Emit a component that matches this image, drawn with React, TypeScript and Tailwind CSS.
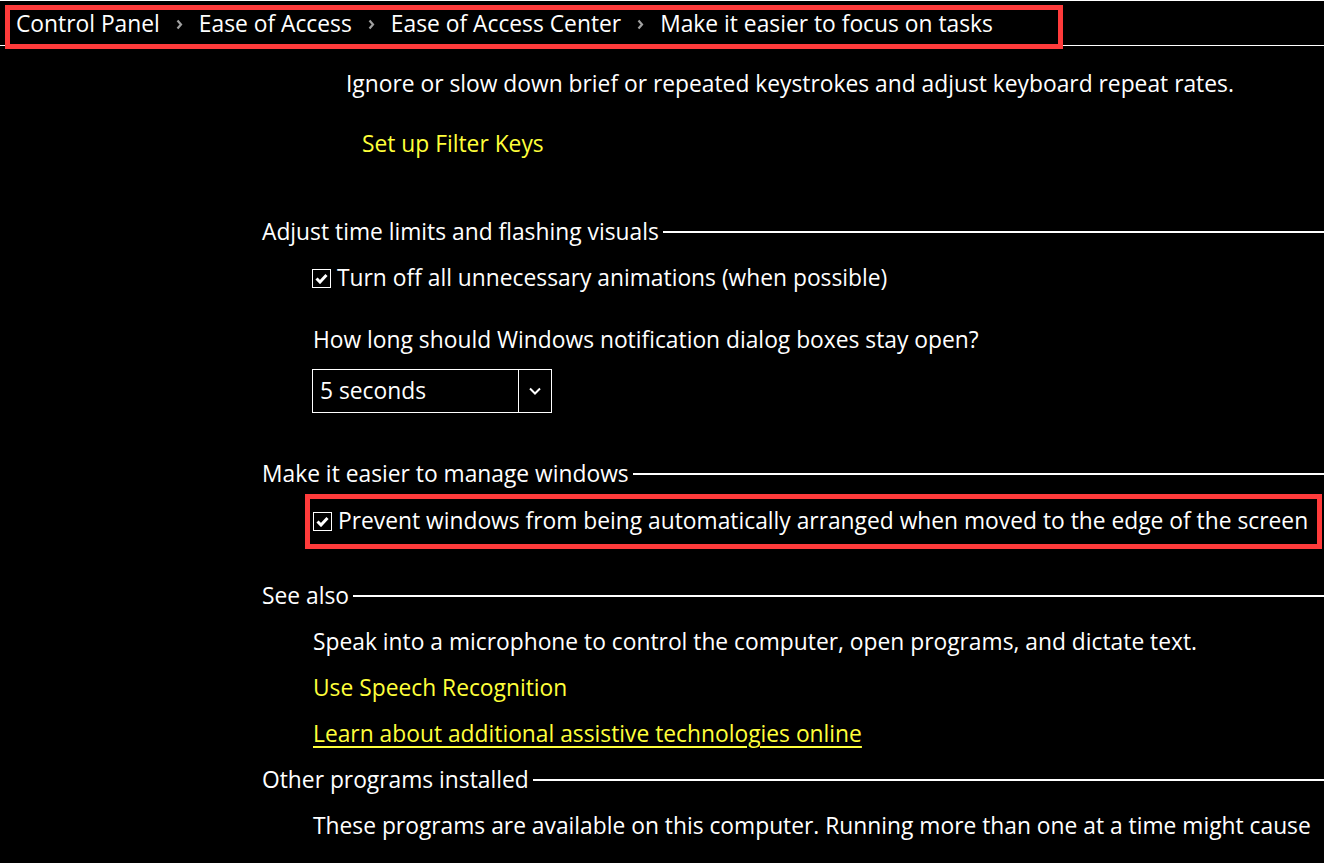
import type { ReactNode } from "react";

const Chevron = () => (
  <svg width="7" height="11" viewBox="0 0 7 11" className="mx-[16px]">
    <path d="M1.5 1.5 L5 5.5 L1.5 9.5" stroke="#a0a0a0" strokeWidth="2.2" fill="none" />
  </svg>
);

const Check = () => (
  <div className="w-[19px] h-[19px] border border-white flex items-center justify-center shrink-0">
    <svg width="13" height="11" viewBox="0 0 13 11">
      <path d="M1.5 5.5 L5 9 L11.5 2" stroke="white" strokeWidth="3" fill="none" />
    </svg>
  </div>
);

const SectionTitle = ({ children }: { children: ReactNode }) => (
  <div className="flex items-center h-[30px]">
    <span className="whitespace-nowrap">{children}</span>
    <div className="flex-1 h-[2px] bg-white ml-[4px]" />
  </div>
);

const Row = ({ children, className = "" }: { children: ReactNode; className?: string }) => (
  <p className={`h-[30px] leading-[30px] whitespace-nowrap ${className}`}>{children}</p>
);

const App = () => {
  const crumbs = ["Control Panel", "Ease of Access", "Ease of Access Center", "Make it easier to focus on tasks"];
  return (
    <div
      className="w-[1324px] h-[863px] bg-black text-white overflow-hidden border-t border-white text-[22.8px]"
      style={{ fontFamily: '"Open Sans", "Noto Sans", sans-serif' }}
    >
      <div className="relative h-[45px] border-b border-white">
        <div className="absolute left-[5px] top-[4px] w-[1058px] h-[44px] border-[5px] border-[#ff3b3b] bg-black flex items-center pl-[6px] pb-[5px]">
          {crumbs.map((c, i) => (
            <div key={c} className="flex items-center whitespace-nowrap">
              {i > 0 && <Chevron />}
              <span>{c}</span>
            </div>
          ))}
        </div>
      </div>

      <div className="pl-[262px]">
        <Row className="mt-[23px] ml-[84px]">
          Ignore or slow down brief or repeated keystrokes and adjust keyboard repeat rates.
        </Row>
        <Row className="mt-[30px] ml-[100px] text-[#ffff3a]">Set up Filter Keys</Row>

        <div className="mt-[58px]">
          <SectionTitle>Adjust time limits and flashing visuals</SectionTitle>
        </div>
        <div className="ml-[50px]">
          <div className="mt-[16px] flex items-center gap-[6px] h-[30px]">
            <Check />
            <span className="whitespace-nowrap">Turn off all unnecessary animations (when possible)</span>
          </div>
          <Row className="mt-[32px] ml-[1px]">How long should Windows notification dialog boxes stay open?</Row>
          <div className="mt-[14px] w-[240px] h-[44px] border border-white flex">
            <div className="flex-1 flex items-center pl-[7px]">5 seconds</div>
            <div className="w-[33px] border-l border-white flex items-center justify-center">
              <svg width="12" height="8" viewBox="0 0 12 8">
                <path d="M1 1.5 L6 6.5 L11 1.5" stroke="white" strokeWidth="2" fill="none" />
              </svg>
            </div>
          </div>
        </div>

        <div className="mt-[46px]">
          <SectionTitle>Make it easier to manage windows</SectionTitle>
        </div>
        <div className="mt-[5px] ml-[43px] w-[1017px] h-[55px] border-[5px] border-[#ff3b3b] flex items-center gap-[6px] pl-[3px] overflow-hidden">
          <Check />
          <span className="whitespace-nowrap">
            Prevent windows from being automatically arranged when moved to the edge of the screen
          </span>
        </div>

        <div className="mt-[32px]">
          <SectionTitle>See also</SectionTitle>
        </div>
        <div className="ml-[51px]">
          <Row className="mt-[16px]">Speak into a microphone to control the computer, open programs, and dictate text.</Row>
          <Row className="mt-[16px] text-[#ffff3a]">Use Speech Recognition</Row>
          <Row className="mt-[16px] text-[#ffff3a] underline underline-offset-[4px]">
            Learn about additional assistive technologies online
          </Row>
        </div>

        <div className="mt-[16px]">
          <SectionTitle>Other programs installed</SectionTitle>
        </div>
        <Row className="mt-[16px] ml-[51px]">
          These programs are available on this computer. Running more than one at a time might cause
        </Row>
      </div>
    </div>
  );
};

export default App;
